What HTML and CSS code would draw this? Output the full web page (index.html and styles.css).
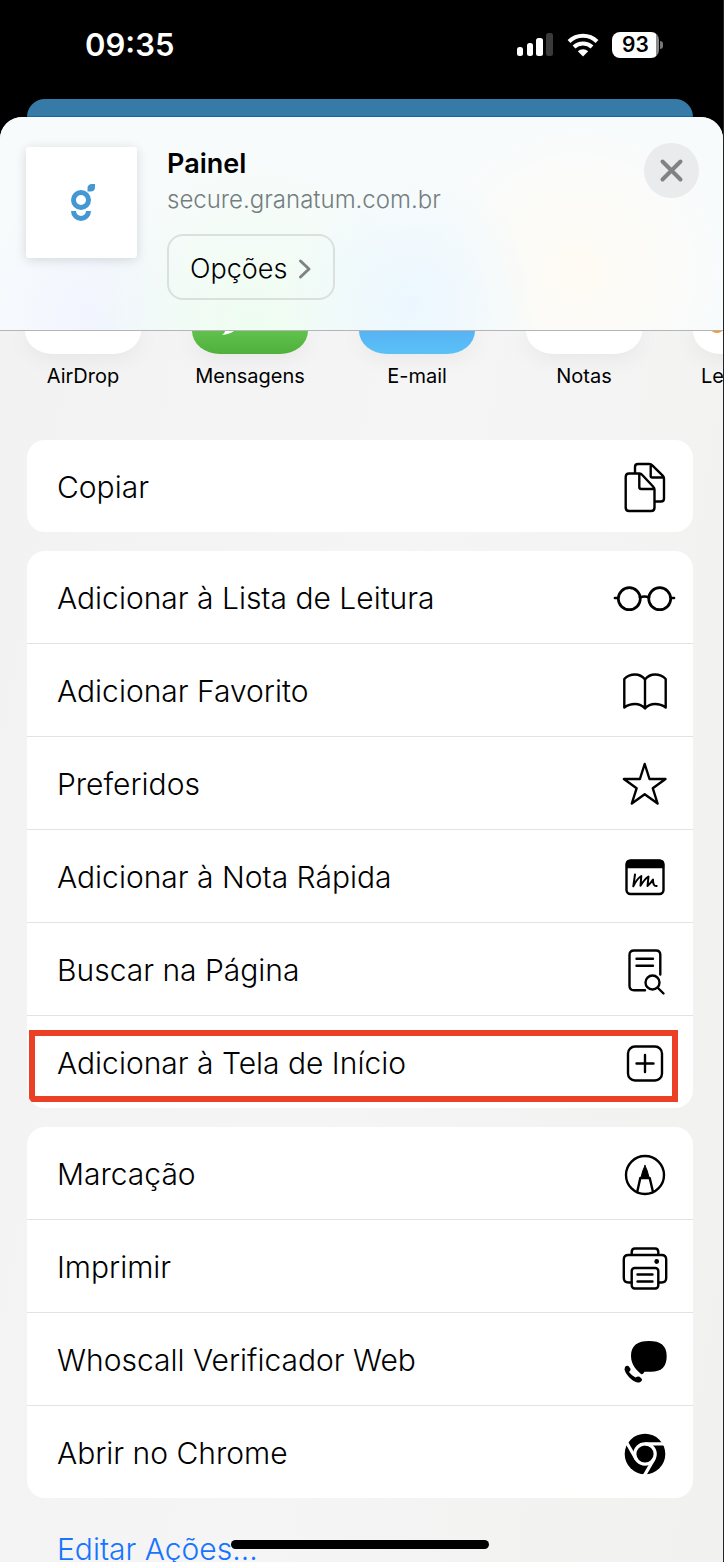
FILE: index.html
```html
<!DOCTYPE html>
<html lang="pt-BR">
<head>
<meta charset="utf-8">
<meta name="viewport" content="width=device-width, initial-scale=1">
<title>Painel</title>
<link rel="stylesheet" href="styles.css">
</head>
<body>
<div class="phone">
  <div class="status">
    <time class="clock">09:35</time>
    <div class="indicators">
      <svg class="signal" width="38" height="26" viewBox="0 0 38 26" aria-hidden="true">
        <rect x="1" y="15" width="6" height="9" rx="2.500"/>
        <rect x="11" y="11" width="6" height="13" rx="2.500"/>
        <rect x="20" y="6" width="7" height="18" rx="2.500"/>
        <rect class="dim" x="30" y="1" width="7" height="23" rx="2.500"/>
      </svg>
      <svg class="wifi" width="32" height="26" viewBox="0 0 32 26" aria-hidden="true">
        <path class="arc" d="M2 9.500A20 20 0 0 1 30 9.500M7 15A13 13 0 0 1 25 15"/>
        <path d="M16 24.500L10.800 19.300A7.500 7.500 0 0 1 21.200 19.300Z"/>
      </svg>
      <div class="battery"><span class="level">93</span><span class="nub"></span></div>
    </div>
  </div>
  <div class="behind"></div>
  <main class="sheet">
    <header class="head">
      <div class="thumb">
        <svg width="26" height="40" viewBox="0 0 26 40" aria-label="Granatum" role="img">
          <circle class="ring" cx="12" cy="17" r="7.500"/>
          <path class="ring" d="M4.500 28a7.500 7.500 0 0 0 15 0"/>
          <path class="leaf" d="M18.500 8.500V5.500Q18.500 1 23 1H26V4Q26 8.500 21.500 8.500Z"/>
        </svg>
      </div>
      <div class="info">
        <h1 class="title">Painel</h1>
        <p class="domain">secure.granatum.com.br</p>
        <button class="options" type="button">Opções
          <svg width="14" height="22" viewBox="0 0 14 22" aria-hidden="true"><path d="M2.500 3L11 11L2.500 19"/></svg>
        </button>
      </div>
      <button class="close" type="button" aria-label="Fechar">
        <svg width="26" height="26" viewBox="0 0 26 26" aria-hidden="true"><path d="M3.500 3.500L21.500 21.500M21.500 3.500L3.500 21.500"/></svg>
      </button>
    </header>

    <ul class="apps">
      <li class="app"><span class="tile"></span>AirDrop</li>
      <li class="app"><span class="tile green"><svg width="117" height="24" viewBox="0 0 117 24" aria-hidden="true"><path class="tail" d="M33 0Q33 2.500 30 3.800Q36 4 42 0Z"/></svg></span>Mensagens</li>
      <li class="app"><span class="tile blue"></span>E-mail</li>
      <li class="app"><span class="tile"></span>Notas</li>
      <li class="app"><span class="tile"><svg width="117" height="24" viewBox="0 0 117 24" aria-hidden="true"><circle class="dot" cx="24" cy="-6" r="7"/></svg></span>Lembretes</li>
    </ul>

    <div class="groups">
      <div class="card">
        <button class="row" type="button">Copiar
          <svg class="icon" viewBox="0 0 64 64" aria-hidden="true"><path d="M22 18V12Q22 9 25 9H36.500Q38 9 39.300 10.300L49.700 20.700Q51 22 51 23.500V43.500Q51 46.500 48 46.500H42M37.700 9.500V21Q37.700 22.500 39.200 22.500H50.500M26.500 18.500H16Q12.700 18.500 12.700 22V52.500Q12.700 56 16 56H38.200Q41.500 56 41.500 52.500V34.500Q41.500 33 40.300 31.800L29.300 20Q28 18.500 26.500 18.500ZM26.300 19V32Q26.300 34 28.300 34H41"/></svg>
        </button>
      </div>

      <div class="card">
        <button class="row" type="button">Adicionar à Lista de Leitura
          <svg class="icon" viewBox="0 0 64 64" aria-hidden="true"><g class="bold"><circle cx="16.300" cy="32.700" r="11"/><circle cx="46.700" cy="32.700" r="11"/><path d="M27 31.500Q31.500 29.500 36 31.500M2 32H5M58 32H61"/></g></svg>
        </button>
        <button class="row" type="button">Adicionar Favorito
          <svg class="icon" viewBox="0 0 64 64" aria-hidden="true"><path d="M32 20.500Q28 15.500 22 15.500Q15.500 15.500 11.300 20V48.500Q16 45 22 45Q28 45 32 49.500Q36 45 42 45Q48 45 52.700 48.500V20Q48.500 15.500 42 15.500Q36 15.500 32 20.500V49"/></svg>
        </button>
        <button class="row" type="button">Preferidos
          <svg class="icon" viewBox="0 0 64 64" aria-hidden="true"><path d="M31.700 12L36.500 27H52.500L39.800 36.300L44.600 51.500L31.700 42.200L18.800 51.500L23.600 36.300L10.900 27H26.900Z"/></svg>
        </button>
        <button class="row" type="button">Adicionar à Nota Rápida
          <svg class="icon" viewBox="0 0 64 64" aria-hidden="true"><rect x="13.500" y="15.500" width="37" height="33.500" rx="4"/><path class="solid" d="M14 22V19Q14 16 17 16H47Q50 16 50 19V22Z"/><path class="pen" d="M22 29.500L20.300 41.300Q24 33.500 28.300 31L27.500 40.800Q31.500 34 35.500 31.500L34.500 41Q37.500 38.500 40 34.500Q39.800 41.500 43.700 41"/></svg>
        </button>
        <button class="row" type="button">Buscar na Página
          <svg class="icon" viewBox="0 0 64 64" aria-hidden="true"><path d="M32 52.300H21Q16.500 52.300 16.500 48V17Q16.500 12.500 21 12.500H43Q47.300 12.500 47.300 17V36.500M23.500 20.700H40M23.500 27.700H40M45 50L50.500 55.500"/><circle cx="39.500" cy="44.500" r="7"/></svg>
        </button>
        <button class="row marked" type="button">Adicionar à Tela de Início
          <svg class="icon" viewBox="0 0 64 64" aria-hidden="true"><rect x="15" y="15.500" width="34" height="34" rx="7"/><path d="M32 24V41M23.500 32.500H40.500"/></svg>
        </button>
      </div>

      <div class="card">
        <button class="row" type="button">Marcação
          <svg class="icon" viewBox="0 0 64 64" aria-hidden="true"><circle cx="32" cy="33" r="19"/><path d="M24.200 50L27.300 36H36.700L40 50"/><path class="solid thin" d="M32 23.500Q34.500 28 36 35.500H28Q29.500 28 32 23.500Z"/></svg>
        </button>
        <button class="row" type="button">Imprimir
          <svg class="icon" viewBox="0 0 64 64" aria-hidden="true"><path d="M18.700 19.500V17Q18.700 13.500 22 13.500H42Q45.300 13.500 45.300 17V19.500M18.500 47.500H15.500Q10.800 47.500 10.800 43V24.500Q10.800 20 15.500 20H48.500Q53.200 20 53.200 24.500V43Q53.200 47.500 48.500 47.500H45.500M24.500 39.500H39.500M24.500 46.500H39.500"/><rect x="18.700" y="33" width="26.600" height="20.500" rx="3"/><circle class="solid" cx="43.700" cy="26.500" r="1.200"/></svg>
        </button>
        <button class="row" type="button">Whoscall Verificador Web
          <svg class="icon" viewBox="0 0 64 64" aria-hidden="true"><path class="fill" d="M36 13C47.500 13 53.700 17.500 53.700 28C53.700 39 48.500 43.700 38 43.700H31.500Q30 46.500 28.300 46.300C25 43 18 38 18 28C18 17.500 24.500 13 36 13Z"/><path class="fill" d="M12 39Q13.500 37 15.500 38L17.500 40.800Q18 42.500 16 44Q18.500 47.500 22.500 49.500Q25 47.800 26.500 48.800L28.500 50.500Q30 52.500 27 54.200Q23 55.500 18 51Q12.500 46 11.500 41.500Z"/></svg>
        </button>
        <button class="row" type="button">Abrir no Chrome
          <svg class="icon" viewBox="0 0 64 64" aria-hidden="true"><circle class="fill" cx="32" cy="33" r="20.300"/><g class="cut"><circle cx="32" cy="33" r="10.200"/><path d="M32 22.800H54"/><path d="M32 22.800H54" transform="rotate(120 32 33)"/><path d="M32 22.800H54" transform="rotate(240 32 33)"/></g></svg>
        </button>
      </div>
    </div>

    <a class="edit" href="#">Editar Ações...</a>
  </main>
  <div class="home"></div>
</div>
</body>
</html>
```

FILE: styles.css
```css
* {
  box-sizing: border-box;
}

body {
  margin: 0;
  background: #242426;
  font-family: Inter, "Liberation Sans", sans-serif;
  color: #000;
}

button {
  margin: 0;
  border: 0;
  background: none;
  font: inherit;
  color: inherit;
  cursor: pointer;
}

.phone {
  position: relative;
  display: flex;
  flex-direction: column;
  height: 100vh;
  margin-right: 1px;
  overflow: hidden;
  background: #000;
}

/* Status bar */

.status {
  display: flex;
  flex: none;
  align-items: center;
  justify-content: space-between;
  height: 99px;
  padding: 0 60px 10px 85px;
  color: #fff;
}

.clock {
  font-size: 31px;
  font-weight: 600;
}

.indicators {
  display: flex;
  align-items: center;
  gap: 13px;
  fill: #fff;
}

.signal .dim {
  fill: #3a3a3a;
}

.wifi .arc {
  fill: none;
  stroke: #fff;
  stroke-width: 4;
}

.battery {
  display: flex;
  align-items: center;
  gap: 1px;
}

.level {
  width: 47px;
  border-radius: 8px;
  background: linear-gradient(90deg, #fff 93%, #8a8a8a 93%);
  color: #000;
  font-size: 21px;
  font-weight: 600;
  line-height: 26px;
  text-align: center;
}

.nub {
  width: 3px;
  height: 8px;
  border-radius: 0 4px 4px 0;
  background: #777;
}

.behind {
  flex: none;
  height: 18px;
  margin: 0 30px 0 27px;
  border-radius: 18px 18px 0 0;
  border-bottom: 1px solid #19679a;
  background: #367ba7;
}

/* Share sheet */

.sheet {
  display: flex;
  flex: 1 0 auto;
  flex-direction: column;
  overflow: hidden;
  border-radius: 22px 22px 0 0;
  background: linear-gradient(100deg, #f2f2f2, #f5f5f5 50%, #f1f1f0);
}

.head {
  display: flex;
  align-items: flex-start;
  gap: 30px;
  padding: 30px 24px 30px 26px;
  border-bottom: 1px solid #b4b6b6;
  background:
    radial-gradient(circle at 57% 88%, #ebf7ff, rgba(235, 247, 255, 0) 130px),
    radial-gradient(circle at 80% 72%, #fffbf4, rgba(255, 251, 244, 0) 150px),
    radial-gradient(circle at 35% 95%, #effdf1, rgba(239, 253, 241, 0) 170px),
    radial-gradient(circle at 14% 95%, #f1f4ff, rgba(241, 244, 255, 0) 130px),
    #f8fbfc;
}

.thumb {
  display: flex;
  flex: none;
  align-items: center;
  justify-content: center;
  width: 111px;
  height: 111px;
  border-radius: 3px;
  background: #fff;
  box-shadow: 0 2px 12px rgba(0, 0, 0, 0.14);
}

.ring {
  fill: none;
  stroke: #4497d3;
  stroke-width: 5;
}

.leaf {
  fill: #4497d3;
}

.info {
  display: flex;
  flex: 1;
  flex-direction: column;
  align-items: flex-start;
}

.title {
  margin: 0;
  font-size: 27px;
  font-weight: 600;
  line-height: 34px;
}

.domain {
  margin: 0 0 15px;
  color: #747d80;
  font-size: 24px;
  font-weight: 300;
  line-height: 38px;
}

.options {
  display: flex;
  align-items: center;
  gap: 11px;
  padding: 4px 21px 0 21px;
  border: 2px solid #dbe0df;
  border-radius: 16px;
  font-size: 27px;
  font-weight: 300;
  line-height: 58px;
}

.options svg,
.close svg {
  fill: none;
  stroke: #808284;
  stroke-linecap: round;
  stroke-linejoin: round;
  stroke-width: 3;
}

.close {
  display: flex;
  flex: none;
  align-items: center;
  justify-content: center;
  width: 55px;
  height: 55px;
  margin-top: -4px;
  padding: 0;
  border-radius: 50%;
  background: #e9ebec;
}

.close svg {
  stroke-width: 4;
}

/* App shortcuts */

.apps {
  display: flex;
  gap: 51px;
  margin: 0;
  padding: 0 0 0 25px;
  overflow: hidden;
  list-style: none;
}

.app {
  display: flex;
  flex: none;
  flex-direction: column;
  align-items: center;
  gap: 6px;
  width: 116px;
  height: 109px;
  font-size: 20px;
  line-height: 32px;
}

.tile {
  flex: none;
  width: 116px;
  height: 23px;
  overflow: hidden;
  border-radius: 0 0 28px 28px / 0 0 23px 23px;
  background: #fff;
  box-shadow: 0 2px 24px rgba(0, 0, 0, 0.07);
}

.tile svg {
  display: block;
}

.green {
  background: linear-gradient(#60c14c, #4fb03b);
}

.blue {
  background: linear-gradient(#57b3f4, #5ac1f7);
}

.tail {
  fill: #fff;
}

.dot {
  fill: #fff;
  stroke: #f39a2b;
  stroke-width: 2;
}

/* Action lists */

.groups {
  display: flex;
  flex-direction: column;
  gap: 19px;
  padding: 0 30px 0 27px;
}

.card {
  overflow: hidden;
  border-radius: 18px;
  background: #fff;
}

.row {
  position: relative;
  display: flex;
  align-items: center;
  justify-content: space-between;
  width: 100%;
  height: 92px;
  padding: 1px 16px 0 30px;
  font-size: 30px;
  font-weight: 300;
  text-align: left;
}

.row + .row {
  height: 93px;
  border-top: 1px solid #e3e3e3;
}

.marked::after {
  content: "";
  position: absolute;
  inset: 14px 15px 6px 2px;
  border: 6px solid #eb4026;
}

.icon {
  flex: none;
  width: 64px;
  height: 64px;
  fill: none;
  stroke: #000;
  stroke-linecap: round;
  stroke-linejoin: round;
  stroke-width: 2.4;
}

.icon .bold {
  stroke-width: 2.7;
}

.icon .solid {
  fill: #000;
}

.icon .thin {
  stroke-width: 1;
}

.icon .pen {
  stroke-width: 2;
}

.icon .fill {
  fill: #000;
  stroke: none;
}

.icon .cut {
  stroke: #fff;
  stroke-linecap: butt;
  stroke-width: 3.2;
}

.edit {
  padding: 31px 57px 0;
  color: #1774ff;
  font-size: 30px;
  font-weight: 300;
  line-height: 40px;
  text-decoration: none;
}

.home {
  position: absolute;
  bottom: 13px;
  left: 32%;
  width: 258px;
  height: 9px;
  border-radius: 5px;
  background: #000;
}
```
